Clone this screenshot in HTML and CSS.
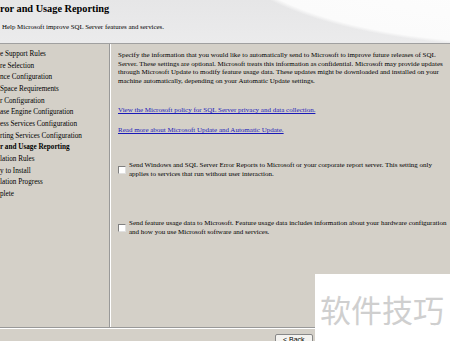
FILE: index.html
```html
<!DOCTYPE html>
<html lang="en">
<head>
<meta charset="UTF-8">
<title>Error and Usage Reporting</title>
<link rel="stylesheet" href="styles.css">
</head>
<body>
<div class="wizard">
  <div class="header">
    <div class="title">ror and Usage Reporting</div>
    <div class="subtitle">Help Microsoft improve SQL Server features and services.</div>
  </div>
  <div class="main">
    <ul class="steps">
      <li>e Support Rules</li>
      <li>re Selection</li>
      <li>nce Configuration</li>
      <li>Space Requirements</li>
      <li>r Configuration</li>
      <li>ase Engine Configuration</li>
      <li>ess Services Configuration</li>
      <li>rting Services Configuration</li>
      <li class="current">r and Usage Reporting</li>
      <li>lation Rules</li>
      <li>y to Install</li>
      <li>lation Progress</li>
      <li>plete</li>
    </ul>
    <div class="content">
      <p class="intro">Specify the information that you would like to automatically send to Microsoft to improve future releases of SQL Server. These settings are optional. Microsoft treats this information as confidential. Microsoft may provide updates through Microsoft Update to modify feature usage data. These updates might be downloaded and installed on your machine automatically, depending on your Automatic Update settings.</p>
      <a class="link first" href="#">View the Microsoft policy for SQL Server privacy and data collection.</a>
      <a class="link" href="#">Read more about Microsoft Update and Automatic Update.</a>
      <label class="option first">
        <input type="checkbox">
        <span>Send Windows and SQL Server Error Reports to Microsoft or your corporate report server. This setting only applies to services that run without user interaction.</span>
      </label>
      <label class="option second">
        <input type="checkbox">
        <span class="nowrap">Send feature usage data to Microsoft. Feature usage data includes information about your hardware configuration<br>and how you use Microsoft software and services.</span>
      </label>
    </div>
  </div>
  <div class="footer">
    <button class="back">&lt; Back</button>
  </div>
  <div class="watermark">软件技巧</div>
</div>
</body>
</html>
```
FILE: styles.css
```css
body { margin: 0; background-color: #d4d0c8; font-family: "Liberation Serif", "Times New Roman", serif; color: #000; }
.wizard { position: relative; width: 450px; height: 341px; overflow: hidden; }
.header { height: 44px; border-bottom: 1px solid #a0a0a0; box-sizing: border-box; background: radial-gradient(ellipse 304px 106px at 520px -60px, #ffffff 0%, #fbfbfb 97%, rgba(255,255,255,0) 100%), linear-gradient(to bottom, #e6e6e7 0%, #ebebec 100%); }
.title { font-weight: bold; font-size: 10.3px; padding-top: 2px; line-height: 13px; }
.subtitle { font-size: 6.9px; line-height: 10px; margin-top: 7px; padding-left: 2px; }
.main { display: flex; height: 283px; border-bottom: 1px solid #999; box-shadow: 0 1px 0 #fff; }
.steps { list-style: none; margin: 0; padding: 5px 0 0 0; width: 111px; border-right: 1px solid #999; box-shadow: 1px 0 0 #fff; font-size: 7.2px; line-height: 11.67px; }
.steps .current { font-weight: bold; }
.content { flex: 1; padding: 0 0 0 8px; font-size: 7px; line-height: 9px; }
.intro { margin: 7px 0 0 0; width: 332px; line-height: 8.6px; }
.link { display: block; color: #1a1ab8; margin-top: 11px; white-space: nowrap; }
.link.first { margin-top: 21px; }
.option { display: flex; align-items: center; margin-top: 26px; width: 330px; }
.option.second { margin-top: 40px; }
.option input { appearance: none; margin: 0 3px 0 0; width: 8px; height: 8px; flex: none; background: #fff; border: 1px solid #808080; border-right-color: #e0e0e0; border-bottom-color: #e0e0e0; box-sizing: border-box; }
.nowrap { white-space: nowrap; }
.footer { height: 14px; padding-left: 275px; padding-top: 6px; box-sizing: border-box; }
.back { display: block; font-family: "Liberation Sans", Arial, sans-serif; font-size: 7px; line-height: 10px; padding: 0 7px; height: 12px; background: #f4f3f0; border: 1px solid #888; border-radius: 2px; }
.watermark { position: absolute; left: 315px; top: 274px; width: 135px; height: 67px; background: #fff; color: #cfcfcf; font-family: "Noto Sans CJK SC", sans-serif; font-size: 31px; line-height: 31px; padding-left: 5px; padding-top: 19px; box-sizing: border-box; }
```
